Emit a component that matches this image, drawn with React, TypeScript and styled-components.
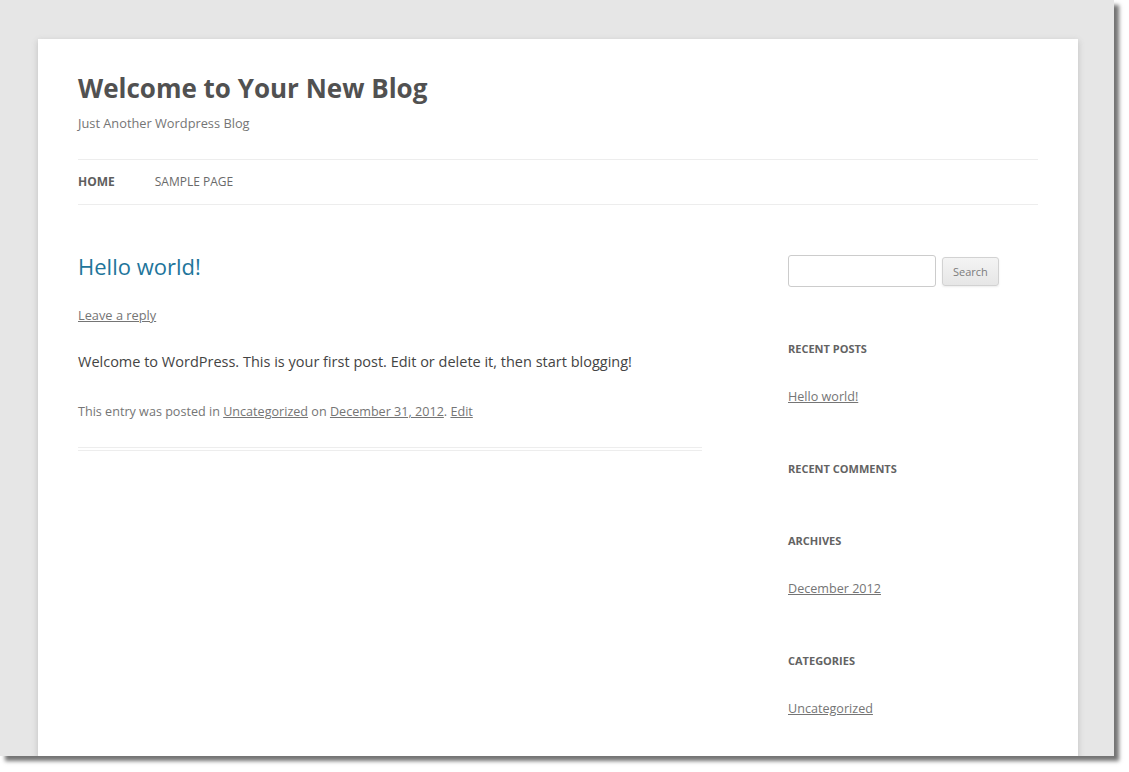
import styled, { createGlobalStyle } from "styled-components";

const GlobalStyle = createGlobalStyle`
  html, body {
    margin: 0;
    padding: 0;
    background: #ffffff;
  }
  body {
    height: 772px;
    font-family: "Open Sans", "Liberation Sans", sans-serif;
    color: #444444;
  }
`;

const Frame = styled.div`
  width: 1076px;
  height: 717px;
  padding: 39px 0 0 38px;
  background: #e6e6e6;
  overflow: hidden;
  box-shadow: 5px 5px 4px rgba(0, 0, 0, 0.55);
`;

const Page = styled.div`
  width: 960px;
  min-height: 760px;
  padding: 0 40px;
  background: #ffffff;
  box-shadow: 0 2px 6px rgba(100, 100, 100, 0.3);
`;

const Header = styled.header`
  padding-top: 29px;
`;

const SiteTitle = styled.h1`
  margin: 0;
  font-size: 26px;
  line-height: 40px;
  font-weight: 700;
  color: #515151;
`;

const Tagline = styled.h2`
  margin: 0;
  padding-top: 3px;
  font-size: 12.8px;
  line-height: 24px;
  font-weight: 400;
  color: #757575;
`;

const Nav = styled.nav`
  margin-top: 24px;
  display: flex;
  gap: 40px;
  border-top: 1px solid #ededed;
  border-bottom: 1px solid #ededed;
  height: 44px;
  align-items: center;
`;

const NavItem = styled.a<{ $current?: boolean }>`
  font-size: 12px;
  line-height: 24px;
  margin-top: -1px;
  text-transform: uppercase;
  text-decoration: none;
  color: ${(p) => (p.$current ? "#5e5e5e" : "#6a6a6a")};
  font-weight: ${(p) => (p.$current ? 700 : 400)};
`;

const Main = styled.div`
  display: flex;
  justify-content: space-between;
  padding-top: 48px;
`;

const Content = styled.article`
  width: 624px;
  border-bottom: 4px double #ededed;
  padding-bottom: 23px;
  align-self: flex-start;
`;

const EntryTitle = styled.h1`
  margin: 0;
  font-size: 22px;
  line-height: 26px;
  font-weight: 400;
  color: #21759b;
`;

const ReplyLink = styled.a`
  display: block;
  margin-top: 24px;
  font-size: 12.8px;
  line-height: 24px;
  color: #757575;
`;

const Body = styled.p`
  margin: 23px 0 0;
  font-size: 14.5px;
  line-height: 24px;
  color: #444444;
`;

const Meta = styled.footer`
  margin-top: 26px;
  font-size: 12.6px;
  line-height: 24px;
  color: #757575;

  a {
    color: #757575;
  }
`;

const Sidebar = styled.aside`
  width: 250px;
  padding-top: 2px;
`;

const SearchForm = styled.form`
  display: flex;
  align-items: center;
  gap: 6px;
  margin-bottom: 50px;
`;

const SearchInput = styled.input`
  width: 148px;
  height: 32px;
  box-sizing: border-box;
  border: 1px solid #cccccc;
  border-radius: 3px;
  font-family: inherit;
`;

const SearchButton = styled.button`
  height: 29px;
  padding: 0 10px;
  font-family: inherit;
  font-size: 11px;
  color: #7c7c7c;
  border: 1px solid #d2d2d2;
  border-radius: 3px;
  background: linear-gradient(#f4f4f4, #e6e6e6);
  box-shadow: 0 1px 2px rgba(64, 64, 64, 0.1);
`;

const Widget = styled.section`
  margin-bottom: 48px;
`;

const WidgetTitle = styled.h3`
  margin: 0;
  font-size: 11px;
  line-height: 24px;
  font-weight: 700;
  text-transform: uppercase;
  color: #636363;
`;

const WidgetList = styled.ul`
  list-style: none;
  margin: 24px 0 0;
  padding: 0;
  font-size: 12.6px;
  line-height: 24px;
  &:empty {
    display: none;
  }
`;

const WidgetLink = styled.a`
  color: #757575;
`;

const widgets = [
  { title: "Recent Posts", links: ["Hello world!"] },
  { title: "Recent Comments", links: [] },
  { title: "Archives", links: ["December 2012"] },
  { title: "Categories", links: ["Uncategorized"] },
];

export default function App() {
  return (
    <>
      <GlobalStyle />
      <Frame>
        <Page>
          <Header>
            <SiteTitle>Welcome to Your New Blog</SiteTitle>
            <Tagline>Just Another Wordpress Blog</Tagline>
            <Nav>
              <NavItem $current>Home</NavItem>
              <NavItem>Sample Page</NavItem>
            </Nav>
          </Header>
          <Main>
            <Content>
              <EntryTitle>Hello world!</EntryTitle>
              <ReplyLink href="#">Leave a reply</ReplyLink>
              <Body>
                Welcome to WordPress. This is your first post. Edit or delete
                it, then start blogging!
              </Body>
              <Meta>
                This entry was posted in <a href="#">Uncategorized</a> on{" "}
                <a href="#">December 31, 2012</a>. <a href="#">Edit</a>
              </Meta>
            </Content>
            <Sidebar>
              <SearchForm onSubmit={(e) => e.preventDefault()}>
                <SearchInput type="text" />
                <SearchButton type="submit">Search</SearchButton>
              </SearchForm>
              {widgets.map((w) => (
                <Widget key={w.title}>
                  <WidgetTitle>{w.title}</WidgetTitle>
                  <WidgetList>
                    {w.links.map((l) => (
                      <li key={l}>
                        <WidgetLink href="#">{l}</WidgetLink>
                      </li>
                    ))}
                  </WidgetList>
                </Widget>
              ))}
            </Sidebar>
          </Main>
        </Page>
      </Frame>
    </>
  );
}
